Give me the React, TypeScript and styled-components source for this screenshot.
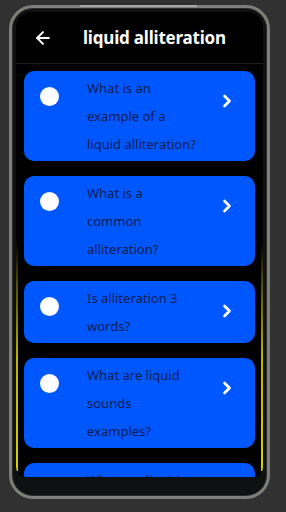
import React from 'react'
import styled, { createGlobalStyle } from 'styled-components'
import { ArrowLeft, ChevronRight } from 'lucide-react'

const questions = [
  'What is an example of a liquid alliteration?',
  'What is a common alliteration?',
  'Is alliteration 3 words?',
  'What are liquid sounds examples?',
  'What are liquid letters?',
]

export default function App() {
  return (
    <>
      <GlobalStyle />
      <Phone>
        <Speaker />
        <Screen>
          <Header>
            <BackButton>
              <ArrowLeft size={20} strokeWidth={2.4} />
            </BackButton>
            <Title>liquid alliteration</Title>
          </Header>
          <List>
            {questions.map((q) => (
              <Card key={q}>
                <Dot />
                <Question>{q}</Question>
                <Chevron>
                  <ChevronRight size={20} strokeWidth={3.2} />
                </Chevron>
              </Card>
            ))}
          </List>
        </Screen>
      </Phone>
    </>
  )
}

const GlobalStyle = createGlobalStyle`
  html, body {
    margin: 0;
    padding: 0;
    background: #313131;
    font-family: "Noto Sans", "DejaVu Sans", sans-serif;
  }
`

const Phone = styled.div`
  position: relative;
  box-sizing: border-box;
  margin: 5px 0 0 9px;
  width: 261px;
  height: 494px;
  padding: 4px 4px 19px 4px;
  border: 3px solid #7d7f78;
  border-radius: 24px;
  background: #0f1011;
  box-shadow: inset 0 0 0 1px #2a2b2a;
`

const Speaker = styled.div`
  position: absolute;
  top: -3px;
  left: 68px;
  width: 117px;
  height: 2px;
  background: #a5a7a2;
`

const Screen = styled.div`
  position: relative;
  height: 100%;
  border-radius: 16px 16px 10px 10px;
  background: #000;
  overflow: hidden;
  display: flex;
  flex-direction: column;

  &::before,
  &::after {
    content: '';
    position: absolute;
    top: 0;
    bottom: 6px;
    width: 2px;
    background: linear-gradient(
      to bottom,
      transparent 0%,
      transparent 50%,
      #4a4600 58%,
      #b9b200 75%,
      #d8d000 100%
    );
    z-index: 2;
  }
  &::before {
    left: 0;
  }
  &::after {
    right: 0;
  }
`

const Header = styled.div`
  flex: 0 0 auto;
  height: 51px;
  display: flex;
  align-items: center;
  border-bottom: 1px solid #1f1f1f;
  color: #fff;
`

const BackButton = styled.div`
  width: 20px;
  height: 20px;
  margin-left: 17px;
  display: flex;
  align-items: center;
  justify-content: center;
  color: #fff;
`

const Title = styled.h1`
  margin: 0 0 0 30px;
  font-size: 17px;
  font-weight: 700;
  letter-spacing: -0.2px;
  color: #fff;
`

const List = styled.div`
  flex: 1 1 auto;
  overflow: hidden;
  padding: 7px 8px 0;
  display: flex;
  flex-direction: column;
  gap: 15px;
`

const Card = styled.div`
  flex: 0 0 auto;
  display: flex;
  align-items: flex-start;
  padding: 3px 0 3px 16px;
  border-radius: 10px;
  background: #0157fe;
`

const Dot = styled.div`
  flex: 0 0 auto;
  width: 19px;
  height: 19px;
  margin-top: 13px;
  border-radius: 50%;
  background: #fff;
`

const Question = styled.p`
  flex: 0 0 110.5px;
  margin: 0 0 0 28px;
  font-size: 13px;
  line-height: 28px;
  color: #0c1c55;
`

const Chevron = styled.div`
  flex: 0 0 auto;
  margin: 17px 0 0 19px;
  display: flex;
  color: #fff;
`
